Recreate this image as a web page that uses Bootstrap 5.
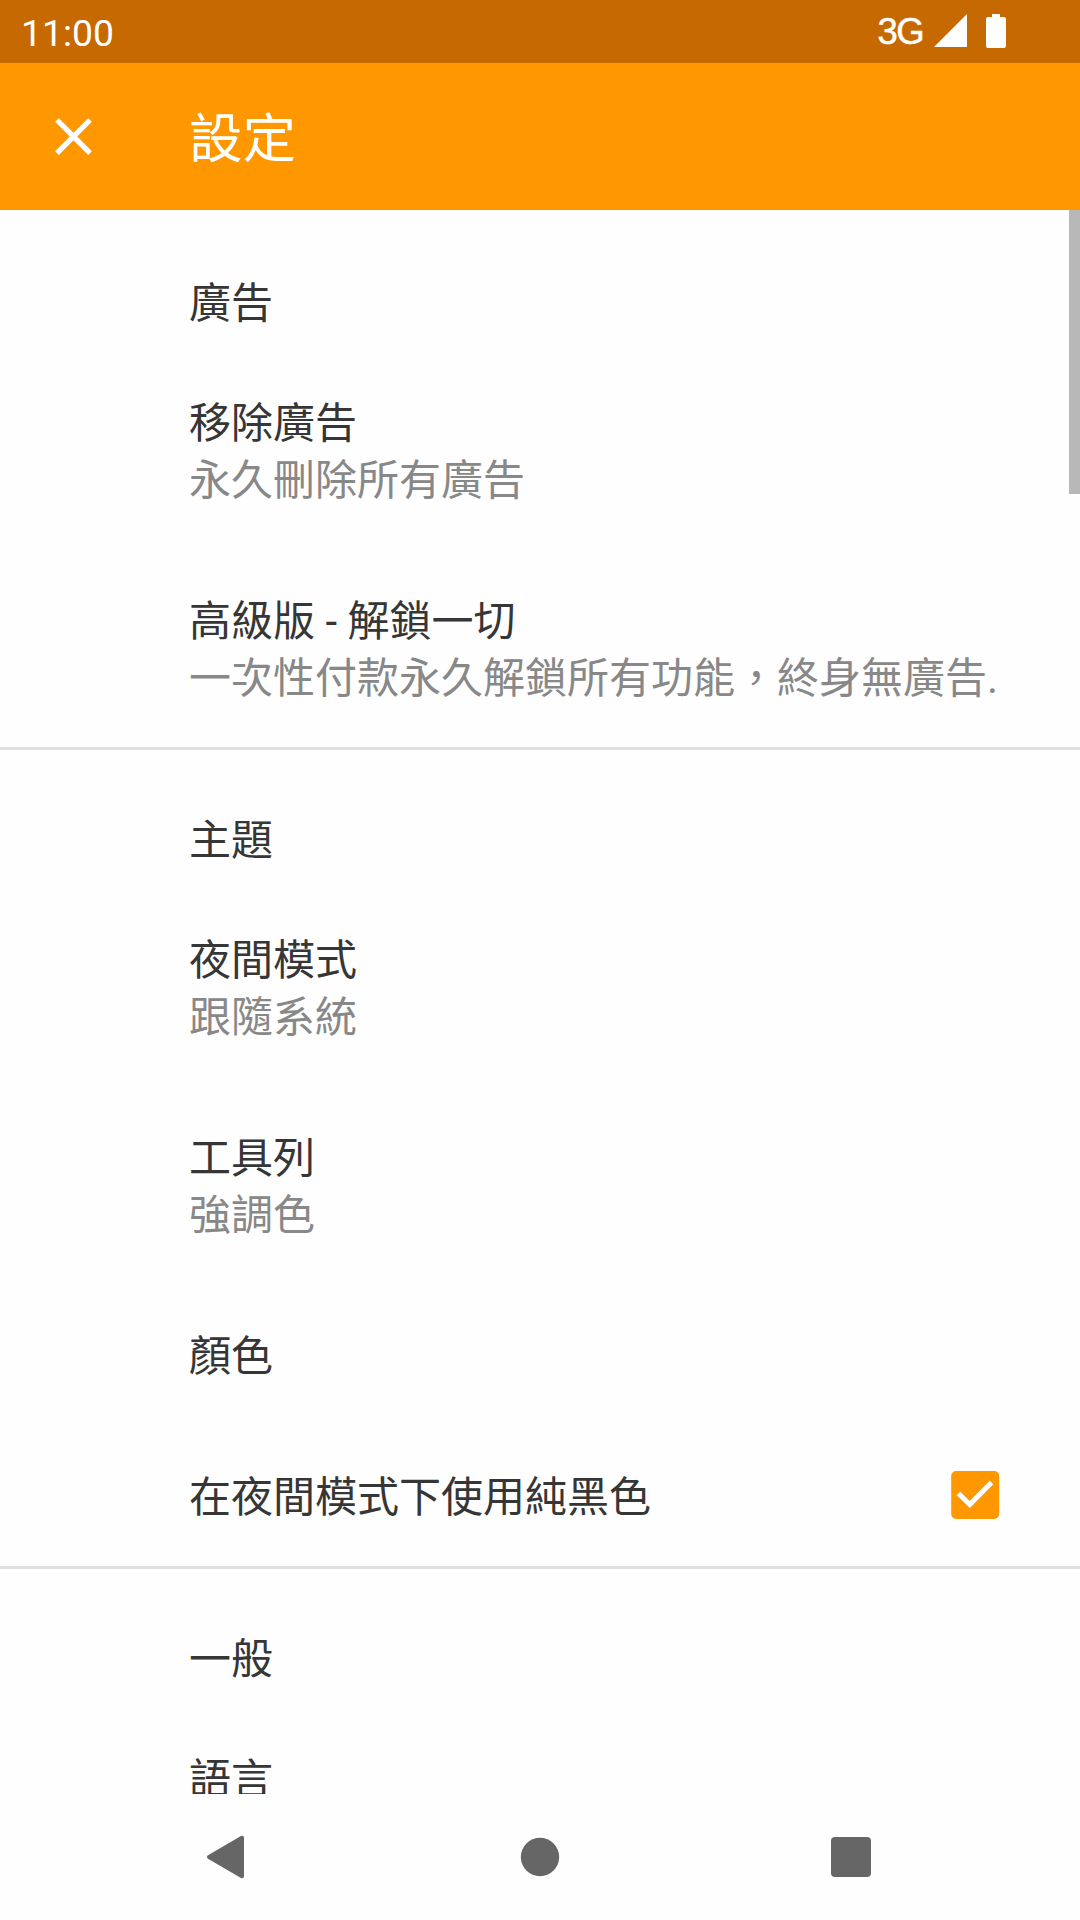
<!DOCTYPE html>
<html lang="zh-Hant">
<head>
<meta charset="utf-8">
<meta name="viewport" content="width=device-width, initial-scale=1">
<title>設定</title>
<link href="https://cdn.jsdelivr.net/npm/bootstrap@5.3.0/dist/css/bootstrap.min.css" rel="stylesheet">
<style>
  body { font-family: Roboto, "Noto Sans CJK TC", sans-serif; font-size: 42px; line-height: 57px; color: #363636; background: #fefefe; }
  .screen { height: 1920px; }
  .status-bar { height: 63px; background: #c66900; padding: 0 73px 0 21px; }
  .clock { font-size: 37.3px; line-height: 63px; padding-top: 2px; }
  .network { font-family: "Liberation Sans", sans-serif; font-size: 36.500px; line-height: 63px; letter-spacing: -1.6px; -webkit-text-stroke: .5px #fff; margin-right: 11px; }
  .app-bar { height: 147px; background: #ff9800; padding: 0 0 0 42px; }
  .app-title { font-size: 53.5px; line-height: 63px; margin-left: 84px; font-weight: 400; padding-top: 5px; }
  .pref-header { padding: 65px 80px 19px 189px; }
  .pref-group + .pref-group .pref-header { border-top: 3px solid #e0e0e0; padding-top: 62px; }
  .pref-item { padding: 44px 80px 40px 189px; }
  .pref-note { color: #888; }
  .check-icon { margin-bottom: 5px; }
  .scroll-thumb { width: 11px; height: 284px; background: #b8b8b8; }
  .nav-keys { height: 126px; background: #fefefe; }
  svg { display: block; flex: none; }
</style>
</head>
<body>
<div class="screen d-flex flex-column overflow-hidden">
  <header class="flex-shrink-0">
    <div class="status-bar d-flex justify-content-between text-white">
      <span class="clock">11:00</span>
      <div class="d-flex">
        <span class="network">3G</span>
        <svg width="73" height="63" viewBox="0 0 73 63" fill="#fff"><path d="M33 14V47H0Z"/><path d="M58 14h8v3h4q2 0 2 2v27q0 2-2 2H54q-2 0-2-2V19q0-2 2-2h4z"/></svg>
      </div>
    </div>
    <nav class="app-bar d-flex align-items-center text-white">
      <svg width="63" height="63" viewBox="0 0 24 24" fill="#fff" role="img" aria-label="關閉"><path d="M19 6.41L17.59 5 12 10.59 6.41 5 5 6.41 10.59 12 5 17.59 6.41 19 12 13.41 17.59 19 19 17.59 13.41 12z"/></svg>
      <h1 class="app-title mb-0">設定</h1>
    </nav>
  </header>
  <main class="flex-grow-1 overflow-hidden position-relative">
    <section class="pref-group">
      <div class="pref-header">廣告</div>
      <div class="pref-item"><div>移除廣告</div><div class="pref-note">永久刪除所有廣告</div></div>
      <div class="pref-item"><div>高級版 - 解鎖一切</div><div class="pref-note text-nowrap">一次性付款永久解鎖所有功能，終身無廣告.</div></div>
    </section>
    <section class="pref-group">
      <div class="pref-header">主題</div>
      <div class="pref-item"><div>夜間模式</div><div class="pref-note">跟隨系統</div></div>
      <div class="pref-item"><div>工具列</div><div class="pref-note">強調色</div></div>
      <div class="pref-item">顏色</div>
      <div class="pref-item d-flex justify-content-between align-items-center"><span>在夜間模式下使用純黑色</span>
        <svg class="check-icon" width="49" height="48" viewBox="0 0 49 48"><rect x=".2" width="48" height="48" rx="5" fill="#ff9800"/><path d="M7.500 22.500L18.800 33.500 40.500 11.500" fill="none" stroke="#fff" stroke-width="5"/></svg>
      </div>
    </section>
    <section class="pref-group">
      <div class="pref-header">一般</div>
      <div class="pref-item">語言</div>
    </section>
    <div class="scroll-thumb position-absolute top-0 end-0"></div>
  </main>
  <footer class="nav-keys flex-shrink-0 d-flex justify-content-center align-items-center">
    <svg width="1080" height="126" viewBox="0 0 1080 126" fill="#666"><path d="M209 63L242 43.800V82.200Z" stroke="#666" stroke-width="4" stroke-linejoin="round"/><circle cx="540" cy="63" r="19.200"/><rect x="831" y="43" width="40" height="40" rx="4"/></svg>
  </footer>
</div>
<script src="https://cdn.jsdelivr.net/npm/bootstrap@5.3.0/dist/js/bootstrap.bundle.min.js"></script>
</body>
</html>
